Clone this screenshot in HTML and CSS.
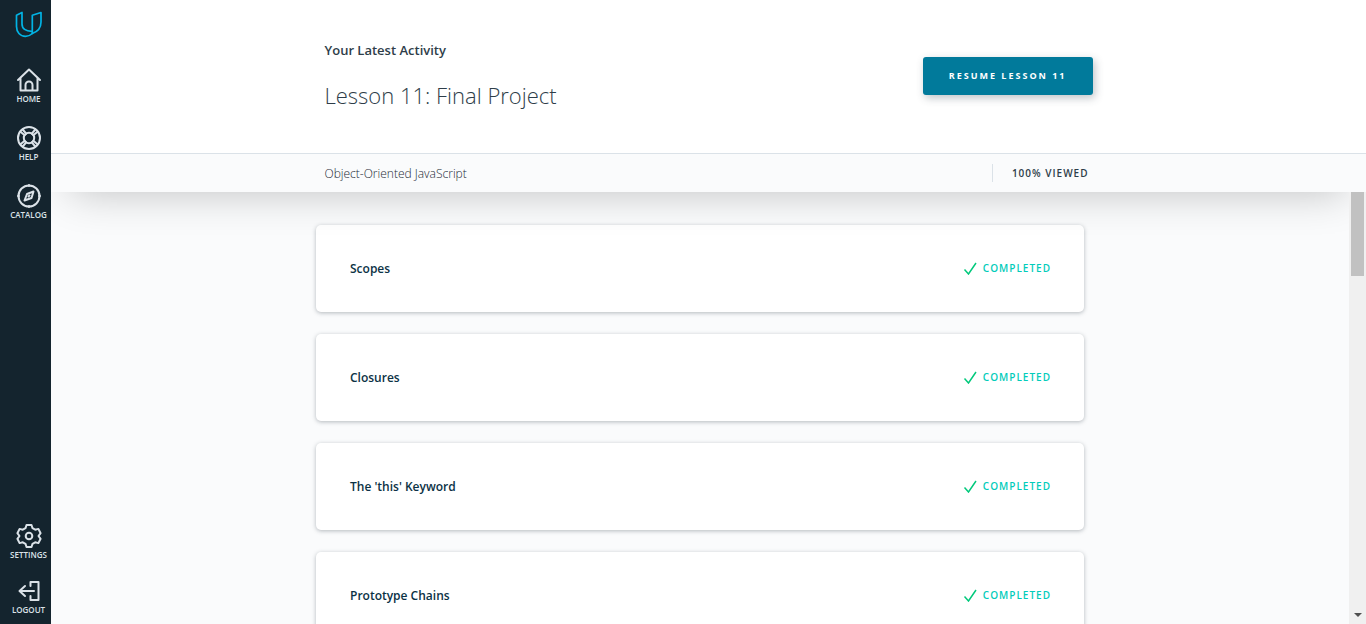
FILE: index.html
```html
<!DOCTYPE html>
<html lang="en">
<head>
<meta charset="utf-8">
<meta name="viewport" content="width=device-width, initial-scale=1">
<title>Object-Oriented JavaScript</title>
<link rel="stylesheet" href="styles.css">
</head>
<body>
<div class="app">
  <nav class="sidebar" aria-label="Main">
    <a class="logo" href="#" aria-label="Udacity">
      <svg viewBox="0 0 28 28" width="28" height="28" fill="none" stroke="#02b3e4" stroke-width="1.7" stroke-linejoin="round" stroke-linecap="round">
        <path d="M1.500 5.300 7 2.500V14c0 4.500 3.500 7.500 10.300 7.300v2.200C15.500 25.300 13.500 26.300 10.500 26.300 5 26.300 1.500 22 1.500 16.500z"/>
        <path d="M17.300 21.300V5.300L26 2.500V12c0 5.500-3 9.500-8.700 11.500"/>
      </svg>
    </a>
    <a class="nav-item" href="#">
      <svg viewBox="0 0 26 26" width="26" height="26" class="icon"><path d="M2 13 13 2.500 24 13M4.500 11v12.500h17V11M9.500 23.500V18a3.500 3.500 0 0 1 7 0v5.500"/></svg>
      <span>HOME</span>
    </a>
    <a class="nav-item" href="#">
      <svg viewBox="0 0 26 26" width="26" height="26" class="icon"><circle cx="13" cy="13" r="11"/><circle cx="13" cy="13" r="5.200"/><path d="m4.500 6.700 4.200 3.500M6.700 4.500l3.500 4.200M19.300 4.500l-3.500 4.200M21.500 6.700l-4.200 3.500M4.500 19.300l4.200-3.500M6.700 21.500l3.500-4.200M19.300 21.500l-3.500-4.200M21.500 19.300l-4.200-3.500"/></svg>
      <span>HELP</span>
    </a>
    <a class="nav-item" href="#">
      <svg viewBox="0 0 26 26" width="26" height="26" class="icon"><circle cx="13" cy="13" r="10.500"/><path d="M13 2v1M13 23v1M2 13h1M23 13h1M17.500 8.500l-2 6.500-7 2.500 2.500-6.500zM12.500 13.500l1-1"/></svg>
      <span>CATALOG</span>
    </a>
    <a class="nav-item nav-bottom" href="#">
      <svg viewBox="0 0 26 26" width="26" height="26" class="icon"><path d="M10.500 2h5l1 3.200 2.700 1.500 3.200-.8 2.200 4.300-2.100 2.800 2.100 2.800-2.200 4.300-3.200-.8-2.700 1.500-1 3.200h-5l-1-3.200-2.700-1.500-3.200.8-2.200-4.300L3.500 13l-2.100-2.800 2.200-4.300 3.200.8 2.700-1.500z"/><circle cx="13" cy="13" r="3.300"/></svg>
      <span>SETTINGS</span>
    </a>
    <a class="nav-item nav-last" href="#">
      <svg viewBox="0 0 26 26" width="26" height="26" class="icon"><path d="M14.500 8V4h8v18h-8v-4M18 13H4M9 8l-5.500 5L9 18"/></svg>
      <span>LOGOUT</span>
    </a>
  </nav>

  <div class="page">
    <header class="header">
      <div class="activity">
        <div class="column activity-row">
          <div>
            <h2 class="eyebrow">Your Latest Activity</h2>
            <h1 class="title">Lesson 11: Final Project</h1>
          </div>
          <button class="resume" type="button">RESUME LESSON 11</button>
        </div>
      </div>
      <div class="course">
        <div class="column course-row">
          <span class="course-name">Object-Oriented JavaScript</span>
          <span class="viewed">100% VIEWED</span>
        </div>
      </div>
    </header>

    <div class="content">
      <main class="lessons">
        <ul class="column list">
          <li class="card"><a href="#">Scopes</a><span class="status"><svg viewBox="0 0 14 14" width="14" height="14" class="check"><path d="m1.500 8.500 4 4.500L13 2"/></svg>COMPLETED</span></li>
          <li class="card"><a href="#">Closures</a><span class="status"><svg viewBox="0 0 14 14" width="14" height="14" class="check"><path d="m1.500 8.500 4 4.500L13 2"/></svg>COMPLETED</span></li>
          <li class="card"><a href="#">The 'this' Keyword</a><span class="status"><svg viewBox="0 0 14 14" width="14" height="14" class="check"><path d="m1.500 8.500 4 4.500L13 2"/></svg>COMPLETED</span></li>
          <li class="card"><a href="#">Prototype Chains</a><span class="status"><svg viewBox="0 0 14 14" width="14" height="14" class="check"><path d="m1.500 8.500 4 4.500L13 2"/></svg>COMPLETED</span></li>
        </ul>
      </main>
      <div class="scrollbar" aria-hidden="true">
        <div class="thumb"></div>
        <svg viewBox="0 0 8 4" width="8" height="4"><path d="M0 0h8L4 4z" fill="#505050"/></svg>
      </div>
    </div>
  </div>
</div>
</body>
</html>
```

FILE: styles.css
```css
* { box-sizing: border-box; }

body {
  margin: 0;
  font-family: "Open Sans", "Noto Sans", sans-serif;
  color: #2e3d49;
}

h1, h2, ul { margin: 0; padding: 0; }
a { color: inherit; text-decoration: none; }

.app {
  display: flex;
  height: 100vh;
  overflow: hidden;
}

/* Sidebar */
.sidebar {
  flex: 0 0 51px;
  display: flex;
  flex-direction: column;
  align-items: center;
  padding: 10px 0 8px 6px;
  background: #14242e;
  z-index: 2;
}

.logo { height: 28px; margin-bottom: 29px; }

.nav-item {
  display: flex;
  flex-direction: column;
  align-items: center;
  height: 38px;
  margin-bottom: 20px;
  color: #dbe2e8;
  font-size: 8px;
  font-weight: 600;
  line-height: 12px;
}

.nav-bottom { margin-top: auto; margin-bottom: 17px; }
.nav-last { margin-bottom: 0; }

.icon {
  flex: none;
  fill: none;
  stroke: currentColor;
  stroke-width: 2;
  stroke-linecap: round;
  stroke-linejoin: round;
}

/* Header */
.page {
  flex: 1;
  min-width: 0;
  display: flex;
  flex-direction: column;
  background: #fafbfc;
}

.column {
  width: 100%;
  max-width: 768px;
  margin: 0 auto;
}

.header {
  z-index: 1;
  box-shadow: 0 20px 40px -20px rgba(0, 0, 0, .24);
}

.activity {
  padding: 40px 0 42px;
  background: #fff;
  border-bottom: 1px solid #dbe2e8;
}

.activity-row {
  display: flex;
  justify-content: space-between;
  align-items: flex-start;
}

.eyebrow {
  font-size: 13px;
  font-weight: 600;
  line-height: 20px;
}

.title {
  margin-top: 20px;
  font-size: 22px;
  font-weight: 300;
  line-height: 31px;
}

.resume {
  height: 38px;
  margin-top: 17px;
  padding: 0 26px;
  border: 0;
  border-radius: 3px;
  background: #017a9b;
  box-shadow: 2px 3px 8px rgba(46, 61, 73, .3);
  color: #fff;
  font: 700 9px/38px "Open Sans", "Noto Sans", sans-serif;
  letter-spacing: 2px;
}

.course { background: #fafbfc; }

.course-row {
  display: flex;
  justify-content: space-between;
  align-items: center;
  height: 38px;
  padding-right: 4px;
}

.course-name {
  color: #1b2a36;
  font-size: 12px;
  font-weight: 300;
}

.viewed {
  padding-left: 19px;
  border-left: 1px solid #dbe2e8;
  font-size: 10px;
  font-weight: 600;
  line-height: 18px;
  letter-spacing: 1px;
}

/* Lessons */
.content {
  flex: 1;
  min-height: 0;
  display: flex;
}

.lessons {
  flex: 1;
  padding-top: 33px;
  overflow: hidden;
}

.list {
  display: grid;
  gap: 22px;
  list-style: none;
}

.card {
  display: flex;
  justify-content: space-between;
  align-items: center;
  height: 87px;
  padding: 0 33px 0 34px;
  border-radius: 5px;
  background: #fff;
  box-shadow: 0 1px 4px rgba(46, 61, 73, .35);
  color: #0b3245;
  font-size: 12px;
  font-weight: 600;
}

.status {
  display: flex;
  align-items: center;
  gap: 6px;
  padding-bottom: 2px;
  color: #02ccba;
  font-size: 10px;
  letter-spacing: 1px;
}

.check {
  fill: none;
  stroke: #02c97c;
  stroke-width: 1.5;
}

.scrollbar {
  position: relative;
  z-index: 1;
  flex: 0 0 17px;
  display: flex;
  flex-direction: column;
  justify-content: space-between;
  align-items: center;
  padding-bottom: 7px;
  background: #f0f0f0;
}

.thumb {
  width: 13px;
  height: 84px;
  background: #c1c1c1;
}
```
